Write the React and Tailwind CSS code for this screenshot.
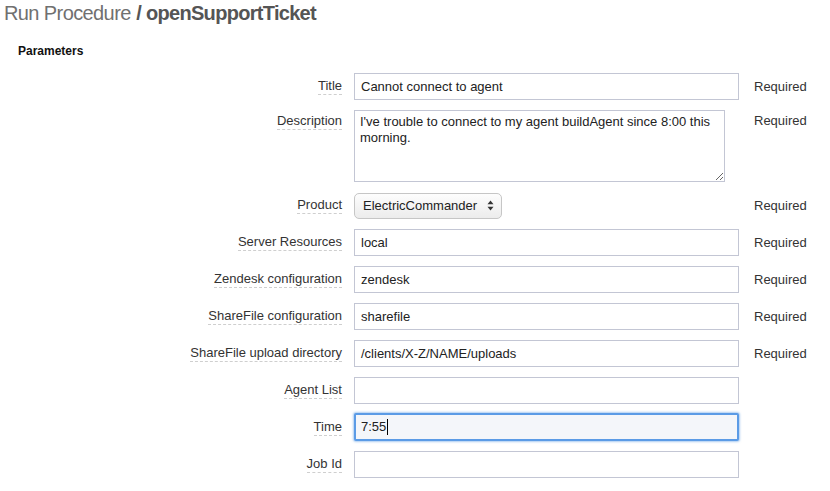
const rows = [
  { label: 'Server Resources', value: 'local', required: true },
  { label: 'Zendesk configuration', value: 'zendesk', required: true },
  { label: 'ShareFile configuration', value: 'sharefile', required: true },
  { label: 'ShareFile upload directory', value: '/clients/X-Z/NAME/uploads', required: true },
  { label: 'Agent List', value: '', required: false },
]

function Label({ children, top }) {
  return (
    <div className={`w-[342px] flex justify-end ${top ? 'items-start pt-[3px]' : 'items-center'}`}>
      <span className="leading-[16px] border-b border-dashed border-[#cfcfcf] text-[#333]">{children}</span>
    </div>
  )
}

function Required({ show, top }) {
  return (
    <div className={`pl-[15px] flex ${top ? 'items-start pt-[3px] leading-[16px]' : 'items-center'} text-[#333]`}>
      {show ? 'Required' : ''}
    </div>
  )
}

function TextBox({ value }) {
  return (
    <div className="ml-[12px] w-[385px] h-[27px] border border-[#c3c6d4] bg-white flex items-center px-[6px] text-[#222]">
      {value}
    </div>
  )
}

export default function App() {
  return (
    <div className="w-[830px] h-[491px] bg-white overflow-hidden text-[13px]" style={{ fontFamily: '"Liberation Sans", Arial, sans-serif' }}>
      <h1 className="pl-[4px] pt-[1px] text-[20px] leading-[24px] text-[#707070]">
        <span className="tracking-[-0.6px]">Run Procedure</span>{' '}
        <span className="font-bold text-[#555] tracking-[-0.7px]">/ openSupportTicket</span>
      </h1>
      <div className="pl-[18px] mt-[19px] font-bold text-[12px] text-[#111] leading-[14px]">Parameters</div>

      <div className="mt-[15px] flex flex-col gap-[10px]">
        <div className="flex h-[27px]">
          <Label>Title</Label>
          <TextBox value="Cannot connect to agent" />
          <Required show />
        </div>

        <div className="flex h-[72px]">
          <Label top>Description</Label>
          <div className="ml-[12px] w-[385px] flex">
            <textarea
              readOnly
              defaultValue="I've trouble to connect to my agent buildAgent since 8:00 this morning."
              className="w-[371px] h-[72px] border border-[#c3c6d4] px-[5px] py-[3px] leading-[16px] text-[#222] outline-none resize-y"
              style={{ fontFamily: 'inherit', fontSize: '13px' }}
            />
          </div>
          <Required show top />
        </div>

        <div className="flex h-[27px]">
          <Label>Product</Label>
          <div className="ml-[12px] w-[385px] flex items-center">
            <div className="w-[148px] h-[26px] rounded-[5px] border border-[#c6c6c6] bg-gradient-to-b from-[#fdfdfd] to-[#ececec] flex items-center justify-between pl-[8px] pr-[7px] text-[#222]">
              <span>ElectricCommander</span>
              <svg width="7" height="11" viewBox="0 0 7 11">
                <path d="M3.5 0.5 L6.5 4.2 L0.5 4.2 Z" fill="#333" />
                <path d="M3.5 10.5 L6.5 6.8 L0.5 6.8 Z" fill="#333" />
              </svg>
            </div>
          </div>
          <Required show />
        </div>

        {rows.map((r) => (
          <div key={r.label} className="flex h-[27px]">
            <Label>{r.label}</Label>
            <TextBox value={r.value} />
            <Required show={r.required} />
          </div>
        ))}

        <div className="flex h-[28px] -mt-[1px]">
          <Label>Time</Label>
          <div className="ml-[12px] w-[385px] h-[28px] border-2 border-[#5b9be6] rounded-[2px] shadow-[0_0_2px_1px_rgba(91,155,230,0.5)] bg-[#f4f6fa] flex items-center px-[5px] text-[#222]">
            7:55<span className="w-px h-[16px] bg-black ml-px" />
          </div>
          <Required show={false} />
        </div>

        <div className="flex h-[27px]">
          <Label>Job Id</Label>
          <TextBox value="" />
          <Required show={false} />
        </div>
      </div>
    </div>
  )
}
